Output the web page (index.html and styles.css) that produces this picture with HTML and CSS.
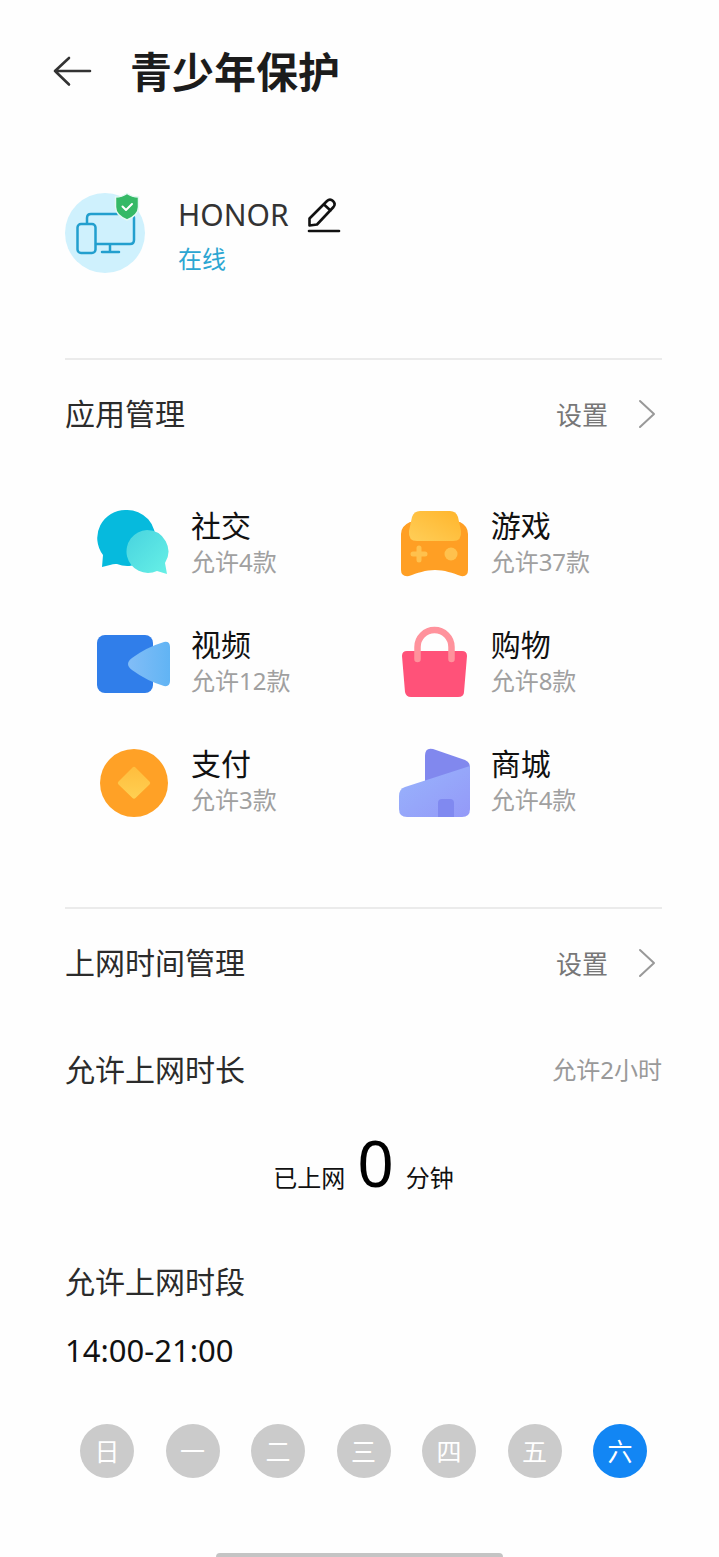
FILE: index.html
```html
<!DOCTYPE html>
<html lang="zh-CN">
<head>
<meta charset="utf-8">
<meta name="viewport" content="width=device-width, initial-scale=1">
<title>青少年保护</title>
<link rel="stylesheet" href="styles.css">
</head>
<body>
<div class="screen">
  <header class="topbar">
    <button class="icon-button" type="button" aria-label="返回">
      <svg width="40" height="34" viewBox="0 0 40 34" fill="none" stroke="#333" stroke-width="2.6" stroke-linecap="round" stroke-linejoin="round"><path d="M38 16H3M17 3L3 16l14 13.500"/></svg>
    </button>
    <h1 class="title">青少年保护</h1>
  </header>
  <main class="content">
    <section class="device">
      <svg class="avatar" width="82" height="82" viewBox="0 0 82 82" fill="none">
        <circle cx="40" cy="41" r="40" fill="#cff1fd"/>
        <g stroke="#229fce" stroke-width="2.500" stroke-linecap="round" stroke-linejoin="round">
          <path d="M22 31v-5q0-4 4-4h39q4 0 4 4v22q0 4-4 4H31M45 52v8M37 60h17"/>
          <rect x="12.500" y="32" width="18" height="29" rx="3.500"/>
        </g>
        <path d="M62 1.500c3.500 2.500 7 3.500 11.500 3.500v10c0 6-4.500 10-11.500 13-7-3-11.500-7-11.500-13V5c4.500 0 8-1 11.500-3.500z" fill="#35b966" stroke="#e4f9f4" stroke-width="1.500"/>
        <path d="M57.500 14.500l3.500 3.500 6-6" stroke="#fff" stroke-width="2" stroke-linecap="round" stroke-linejoin="round"/>
      </svg>
      <div class="device-info">
        <div class="device-name">
          <span>HONOR</span>
          <button class="icon-button" type="button" aria-label="编辑名称">
            <svg width="34" height="36" viewBox="0 0 34 36" fill="none" stroke="#111" stroke-width="2.600" stroke-linecap="round" stroke-linejoin="round"><path d="M2.500 28.500V21.500L20 4q3-3 6 0t0.500 6L10 27.500zM17 7.500l6.500 6"/><path d="M2 34h30"/></svg>
          </button>
        </div>
        <div class="device-status">在线</div>
      </div>
    </section>

    <section class="section">
      <div class="row">
        <h2 class="heading">应用管理</h2>
        <a class="more" href="#apps">设置
          <svg width="18" height="30" viewBox="0 0 18 30" fill="none" stroke="#999" stroke-width="2" stroke-linecap="round" stroke-linejoin="round"><path d="M2 2l14 13L2 28"/></svg>
        </a>
      </div>
      <ul class="apps" id="apps">
        <li class="app">
          <svg width="76" height="76" viewBox="0 0 76 76">
            <defs><linearGradient id="chat" x1="0" y1="0" x2="1" y2="1"><stop stop-color="#48d3df"/><stop offset="1" stop-color="#67f0e6"/></linearGradient></defs>
            <path d="M30 5a28 28 0 1 1-9 54q-3-.5-7 1l-8 2 1-12A28 28 0 0 1 30 5z" fill="#06badd"/>
            <path d="M51 25a21.500 21.500 0 0 1 18 33l2 11-10-3A21.500 21.500 0 1 1 51 25z" fill="url(#chat)"/>
          </svg>
          <div><h3 class="app-name">社交</h3><p class="app-note">允许4款</p></div>
        </li>
        <li class="app">
          <svg width="76" height="76" viewBox="0 0 76 76">
            <defs><linearGradient id="pad" x1="1" y1="0" x2="0" y2="1"><stop stop-color="#ffb52c"/><stop offset="1" stop-color="#ffce58"/></linearGradient></defs>
            <path d="M14 17h50q8 4 8 12v36q0 7-7 6c-8-3-17-6-26-6s-18 3-26 6q-8 1-8-6V29q0-8 9-12z" fill="#ff9f24"/>
            <path d="M24 6h30q6 0 8 6l3 14q1 10-8 10H21q-9 0-8-10l3-14q2-6 8-6z" fill="url(#pad)"/>
            <path d="M23 43v12M17 49h12" stroke="#ffc14d" stroke-width="5" stroke-linecap="round"/>
            <circle cx="55" cy="49" r="6.500" fill="#ffc14d"/>
          </svg>
          <div><h3 class="app-name">游戏</h3><p class="app-note">允许37款</p></div>
        </li>
        <li class="app">
          <svg width="76" height="76" viewBox="0 0 76 76">
            <defs><linearGradient id="lens" x1="0" y1="0" x2="1" y2="0"><stop stop-color="#82bdf7"/><stop offset="1" stop-color="#61b4f4"/></linearGradient></defs>
            <rect x="1" y="11" width="56" height="58" rx="8" fill="#307eea"/>
            <path d="M36 34Q51 23 68 18q6-1 6 5v34q0 6-6 5-17-5-32-16-8-6 0-12z" fill="url(#lens)"/>
          </svg>
          <div><h3 class="app-name">视频</h3><p class="app-note">允许12款</p></div>
        </li>
        <li class="app">
          <svg width="76" height="76" viewBox="0 0 76 76">
            <path d="M11 27h55q5 0 5 5l-3 36q0 5-6 5H15q-5 0-6-5L6 32q0-5 5-5z" fill="#ff5279"/>
            <path d="M21.500 35V23a17 17 0 0 1 34 0v12" fill="none" stroke="#ff929c" stroke-width="6.500" stroke-linecap="round"/>
          </svg>
          <div><h3 class="app-name">购物</h3><p class="app-note">允许8款</p></div>
        </li>
        <li class="app">
          <svg width="76" height="76" viewBox="0 0 76 76">
            <defs><linearGradient id="coin" x1="0" y1="0" x2="0" y2="1"><stop stop-color="#ffbd3d"/><stop offset="1" stop-color="#ffd052"/></linearGradient></defs>
            <circle cx="38" cy="40" r="34" fill="#ffa126"/>
            <path d="M36.500 24.500q1.500-1.500 3 0L53.500 38.500q1.500 1.500 0 3L39.500 55q-1.500 1.500-3 0L22.500 41.500q-1.500-1.500 0-3z" fill="url(#coin)"/>
          </svg>
          <div><h3 class="app-name">支付</h3><p class="app-note">允许3款</p></div>
        </li>
        <li class="app">
          <svg width="76" height="76" viewBox="0 0 76 76">
            <defs><linearGradient id="mall" x1="0" y1="0" x2="1" y2="1"><stop stop-color="#98b4fc"/><stop offset="1" stop-color="#9499f8"/></linearGradient></defs>
            <path d="M29 44V13q0-9 8-7l32 11q5 2 5 7v20z" fill="#8188ee"/>
            <path d="M9 44L74 23v43q0 8-8 8H11q-8 0-8-8V53q0-7 6-9z" fill="url(#mall)"/>
            <path d="M42 74V60q0-4 4-4h8q4 0 4 4v14z" fill="#8089f0"/>
          </svg>
          <div><h3 class="app-name">商城</h3><p class="app-note">允许4款</p></div>
        </li>
      </ul>
    </section>

    <section class="section">
      <div class="row">
        <h2 class="heading">上网时间管理</h2>
        <a class="more" href="#time">设置
          <svg width="18" height="30" viewBox="0 0 18 30" fill="none" stroke="#999" stroke-width="2" stroke-linecap="round" stroke-linejoin="round"><path d="M2 2l14 13L2 28"/></svg>
        </a>
      </div>
      <div class="row row-limit" id="time">
        <h3 class="heading">允许上网时长</h3>
        <span class="limit">允许2小时</span>
      </div>
      <p class="usage"><span>已上网</span><strong class="minutes">0</strong><span>分钟</span></p>
      <h3 class="heading">允许上网时段</h3>
      <p class="period">14:00-21:00</p>
      <div class="days">
        <button class="day" type="button">日</button>
        <button class="day" type="button">一</button>
        <button class="day" type="button">二</button>
        <button class="day" type="button">三</button>
        <button class="day" type="button">四</button>
        <button class="day" type="button">五</button>
        <button class="day day-active" type="button" aria-pressed="true">六</button>
      </div>
    </section>
  </main>
  <div class="home-bar"></div>
</div>
</body>
</html>
```
FILE: styles.css
```css
* {
  box-sizing: border-box;
}

body,
h1,
h2,
h3,
p,
ul {
  margin: 0;
  padding: 0;
}

body {
  background: #fefefe;
  color: #111;
  font-family: "Noto Sans", "Noto Sans CJK SC", sans-serif;
}

svg {
  display: block;
  flex: none;
}

button {
  border: 0;
  padding: 0;
  font: inherit;
  cursor: pointer;
}

.screen {
  display: flex;
  flex-direction: column;
  min-height: 100vh;
}

.topbar {
  display: flex;
  align-items: center;
  gap: 38px;
  padding: 36px 52px;
}

.icon-button {
  background: none;
}

.title {
  font-size: 42px;
  font-weight: 600;
  line-height: 72px;
  color: #1c1c1c;
}

.content {
  flex: 1;
  padding: 48px 57px 0 65px;
}

.device {
  display: flex;
  gap: 31px;
  padding-bottom: 78px;
}

.device-name {
  display: flex;
  align-items: center;
  gap: 18px;
  font-size: 30px;
  line-height: 46px;
  color: #333;
}

.device-status {
  font-size: 24px;
  line-height: 42px;
  color: #2ca6d2;
}

.section {
  border-top: 2px solid #ebebeb;
}

.row {
  display: flex;
  align-items: center;
  justify-content: space-between;
  height: 108px;
}

.row-limit {
  height: 106px;
}

.heading {
  font-size: 30px;
  font-weight: 400;
  line-height: 44px;
  color: #2b2b2b;
}

.more {
  display: flex;
  align-items: center;
  gap: 30px;
  padding-right: 6px;
  font-size: 26px;
  color: #777;
  text-decoration: none;
}

.apps {
  display: grid;
  grid-template-columns: 9fr 8fr;
  row-gap: 43px;
  padding: 37px 0 88px 31px;
  list-style: none;
}

.app {
  display: flex;
  align-items: center;
  gap: 19px;
}

.app-name {
  font-size: 30px;
  font-weight: 400;
  line-height: 38px;
  color: #111;
}

.app-note {
  font-size: 24px;
  line-height: 34px;
  color: #a0a0a0;
}

.limit {
  font-size: 24px;
  line-height: 34px;
  color: #999;
}

.usage {
  display: flex;
  align-items: baseline;
  justify-content: center;
  gap: 12px;
  margin-bottom: 42px;
  font-size: 24px;
  line-height: 80px;
}

.minutes {
  font-size: 64px;
  font-weight: 400;
  color: #000;
}

.period {
  padding-top: 23px;
  font-size: 31px;
  line-height: 46px;
}

.days {
  display: flex;
  justify-content: space-between;
  padding: 51px 15px;
}

.day {
  width: 54px;
  height: 54px;
  border-radius: 50%;
  background: #cbcbcb;
  color: #fff;
  font-size: 25px;
  line-height: 52px;
}

.day-active {
  background: #1286f4;
}

.home-bar {
  align-self: center;
  width: 40%;
  height: 4px;
  border-radius: 4px 4px 0 0;
  background: #c4c4c4;
}
```
